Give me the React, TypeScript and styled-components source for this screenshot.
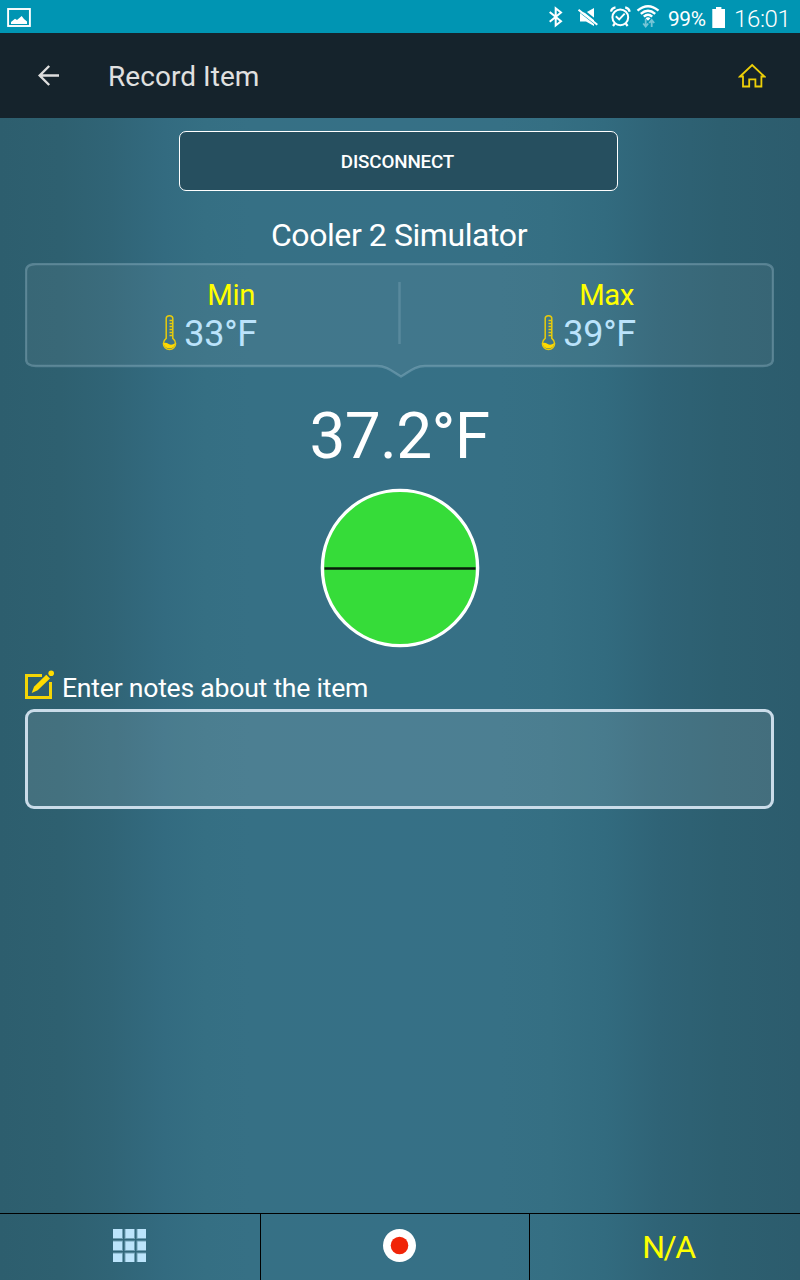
import React from "react";
import styled, { createGlobalStyle } from "styled-components";

const Global = createGlobalStyle`
  *, *::before, *::after { box-sizing: border-box; }
  body { margin: 0; font-family: Roboto, "Liberation Sans", sans-serif; }
`;

const Screen = styled.div`
  width: 800px;
  height: 1280px;
  display: flex;
  flex-direction: column;
  overflow: hidden;
  color: #fff;
  background: linear-gradient(
    90deg,
    #2d5e6e 0, #2e6070 60px, #306476 110px, #336b80 165px, #356f83 205px,
    #367085 250px, #367086 400px, #367085 500px, #356f83 550px, #326b7f 605px,
    #2f6376 660px, #2d5f70 720px, #2c5c6d 800px
  );
`;

const StatusBar = styled.header`
  height: 33px;
  flex: none;
  display: flex;
  align-items: center;
  justify-content: space-between;
  padding: 0 10px 0 7px;
  background: #0095b3;
`;

const StatusGroup = styled.div`
  display: flex;
  align-items: center;
`;

const StatusText = styled.span<{ $size: number; $width: number; $weight: number }>`
  width: ${(p) => p.$width}px;
  margin-left: 8px;
  padding-top: 4px;
  font-size: ${(p) => p.$size}px;
  line-height: 28px;
  font-weight: ${(p) => p.$weight};
  letter-spacing: -0.35px;
  white-space: nowrap;
`;

const AppBar = styled.nav`
  height: 85px;
  flex: none;
  display: flex;
  align-items: center;
  padding: 0 34px 0 37px;
  background: #15232c;
`;

const Title = styled.h1`
  flex: 1;
  margin: 2px 0 0 48px;
  font-size: 28px;
  line-height: 36px;
  font-weight: 400;
  letter-spacing: 0.05px;
  color: #e0e0e0;
`;

const IconButton = styled.button`
  display: flex;
  padding: 0;
  border: 0;
  background: none;
`;

const Content = styled.main`
  flex: 1;
  display: flex;
  flex-direction: column;
  align-items: center;
  padding: 13px 26px 0 25px;
`;

const DisconnectButton = styled.button`
  width: 439px;
  height: 60px;
  margin-right: 2px;
  padding: 2px 2px 0 0;
  border: 1px solid #fff;
  border-radius: 7px;
  background: #264f5f;
  color: #fff;
  font: 500 18.8px/56px Roboto, sans-serif;
  letter-spacing: -0.15px;
`;

const DeviceName = styled.h2`
  margin: 24px 0 8px;
  padding-right: 1px;
  font-size: 32px;
  line-height: 40px;
  font-weight: 400;
  letter-spacing: -0.42px;
`;

const RangePanel = styled.section`
  position: relative;
  width: 749px;
  height: 116px;
  display: flex;
  padding-top: 13px;
`;

const PanelFrame = styled.svg`
  position: absolute;
  inset: 0;
`;

const Limit = styled.div<{ $right: number }>`
  position: relative;
  width: 374px;
  display: flex;
  flex-direction: column;
  align-items: flex-end;
  padding-right: ${(p) => p.$right}px;
`;

const LimitLabel = styled.span`
  padding-right: 2px;
  font-size: 29.3px;
  line-height: 38px;
  letter-spacing: -0.4px;
  color: #ff0;
`;

const LimitValue = styled.span`
  display: flex;
  gap: 7px;
  font-size: 36px;
  line-height: 40px;
  letter-spacing: -0.25px;
  color: #bbe3fb;
`;

const Reading = styled.div`
  margin-top: 22px;
  font-size: 64px;
  line-height: 72px;
  letter-spacing: -0.7px;
`;

const Gauge = styled.svg`
  display: block;
  flex: none;
  margin: 15px 0 22px 1px;
`;

const NotesLabel = styled.label`
  align-self: stretch;
  height: 39px;
  display: flex;
  gap: 7px;
  font-size: 26.6px;
  line-height: 36px;
  letter-spacing: -0.24px;
`;

const NotesInput = styled.textarea`
  width: 749px;
  height: 100px;
  padding: 10px;
  border: 3px solid #cadce9;
  border-radius: 9px;
  outline: 0;
  resize: none;
  color: #fff;
  background: rgba(255, 255, 255, 0.11);
`;

const Footer = styled.footer`
  height: 67px;
  flex: none;
  display: grid;
  grid-template-columns: 261px 269px 270px;
  border-top: 1px solid #000;
`;

const FooterCell = styled.button<{ $pad: string }>`
  display: flex;
  align-items: center;
  justify-content: center;
  padding: ${(p) => p.$pad};
  border: 0;
  border-right: 1px solid #000;
  background: none;
  color: #ff0;
  font: 400 32px/40px Roboto, sans-serif;
  letter-spacing: -1.4px;

  &:last-child {
    border-right: 0;
  }
`;

const Thermometer = () => (
  <svg width="15" height="37" viewBox="0 0 15 37" fill="none">
    <path
      d="M4.2 24.3V4.5Q4.2 1.7 7.5 1.7T10.8 4.5V24.3Q13.6 26.4 13.6 29.5A6.1 6.1 0 0 1 1.4 29.5Q1.4 26.4 4.2 24.3Z"
      stroke="#e8cb0b"
      strokeWidth="1.5"
    />
    <path d="M7.5 6.5H10.5M7.5 9.5H10.5M7.5 12.5H10.5M7.5 15.5H10.5M7.5 18.5H10.5M7.5 21.5H10.5" stroke="#e8cb0b" strokeWidth="1.4" />
    <path d="M1.5 29Q4 28 6.7 30T13.4 29A6 6 0 0 1 1.5 29Z" fill="#ffd900" />
  </svg>
);

export default function App() {
  return (
    <>
      <Global />
      <Screen>
        <StatusBar>
          <svg width="24" height="33" viewBox="0 0 24 33">
            <rect x="1.1" y="9" width="21.8" height="17" fill="none" stroke="#fff" strokeWidth="1.9" />
            <path d="M4 24V22L8 18.7 10 20 14.7 16 17 19 20 21.5V24Z" fill="#fff" />
          </svg>
          <StatusGroup>
            <svg width="112" height="33" viewBox="548 0 112 33" fill="none" stroke="#fff">
              <path d="M549.7 12 561 21.3 555.7 25.5V8.3L561 12.5 549.7 21.7" strokeWidth="2" />
              <path d="M580 12.5H586L594 8V24L580 13ZM580 12.5V21.5H586L594 26V22Z" fill="#fff" stroke="none" />
              <path d="M580.4 8 598.8 22.7" stroke="#0095b3" strokeWidth="2" />
              <path d="M578.5 9.7 597.3 24.8" strokeWidth="2" />
              <circle cx="620.3" cy="17.3" r="7.9" strokeWidth="2" />
              <path d="M615.8 16.2 619.2 19.4 624.7 13.6" strokeWidth="1.9" />
              <path d="M611 11.7Q611.5 8 615.5 7.3M625.2 7.3Q629 8 629.7 11.7M614.8 23.5 613 26M625.8 23.5 627.6 26" strokeWidth="2.2" />
              <path d="M637.5 10.6Q648 1.8 658.5 10.6M640.8 13.8Q648 7.6 655.2 13.8M643.8 16.7Q648 12.8 652.2 16.7" strokeWidth="2.4" />
              <path d="M645.5 18.3Q648 16.1 650.5 18.3L648 20.8Z" fill="#fff" stroke="none" />
              <path d="M645.7 19V26M643.2 23.5 645.7 26.5 648.2 23.5M651.7 27V20.5M649.2 23 651.7 20 654.2 23" stroke="#76c5d6" strokeWidth="1.8" />
            </svg>
            <StatusText $size={20.8} $width={44} $weight={400}>99%</StatusText>
            <svg width="14" height="33" viewBox="0 0 14 33">
              <path d="M.3 9H4V7H9.4V9H13V28H.3Z" fill="#fff" />
            </svg>
            <StatusText $size={24} $width={56} $weight={350}>16:01</StatusText>
          </StatusGroup>
        </StatusBar>

        <AppBar>
          <IconButton aria-label="Back">
            <svg width="23" height="23" viewBox="0 0 23 23" fill="none" stroke="#dedede" strokeWidth="2.4">
              <path d="M22 11.5H3M12.2 2 2.7 11.5 12.2 21" />
            </svg>
          </IconButton>
          <Title>Record Item</Title>
          <IconButton aria-label="Home">
            <svg width="28" height="26" viewBox="0 0 28 26" fill="none" stroke="#edcf08" strokeWidth="1.8">
              <path d="M2 13.5 14.2 2 26.4 13.5H23.4V23.5H17.4V16.3H11.2V23.5H5V13.5Z" />
            </svg>
          </IconButton>
        </AppBar>

        <Content>
          <DisconnectButton>DISCONNECT</DisconnectButton>
          <DeviceName>Cooler 2 Simulator</DeviceName>

          <RangePanel>
            <PanelFrame width="749" height="116" viewBox="0 0 749 116">
              <path
                d="M11 1H738Q748 1 748 8V96Q748 103 738 103H400C390 103 384 109 376 113.5C368 109 362 103 352 103H11Q1 103 1 96V8Q1 1 11 1Z"
                fill="#fff"
                fillOpacity=".055"
                stroke="#b4d2e0"
                strokeOpacity=".3"
                strokeWidth="2.4"
              />
              <path d="M374.5 19V81" stroke="#b4d2e0" strokeOpacity=".2" strokeWidth="2.5" />
            </PanelFrame>
            <Limit $right={142}>
              <LimitLabel>Min</LimitLabel>
              <LimitValue><Thermometer />33°F</LimitValue>
            </Limit>
            <Limit $right={137}>
              <LimitLabel>Max</LimitLabel>
              <LimitValue><Thermometer />39°F</LimitValue>
            </Limit>
          </RangePanel>

          <Reading>37.2°F</Reading>
          <Gauge width="160" height="160" viewBox="0 0 160 160">
            <circle cx="80" cy="80" r="77.6" fill="#36dc39" stroke="#fff" strokeWidth="3.4" />
            <path d="M4.5 80.5H155.5" stroke="#0a1a0a" strokeWidth="2.6" />
          </Gauge>

          <NotesLabel htmlFor="notes">
            <svg width="30" height="30" viewBox="0 0 30 30">
              <path d="M17 5.5H1.5V27.5H25.5V12" fill="none" stroke="#f3d506" strokeWidth="3" />
              <path d="M6.7 23 9 16.7 21.3 4.7 25 8.5 12.7 20.3Z" fill="#ffdc00" />
              <circle cx="26.2" cy="3.2" r="2.8" fill="#ffdc00" />
            </svg>
            Enter notes about the item
          </NotesLabel>
          <NotesInput id="notes" />
        </Content>

        <Footer>
          <FooterCell $pad="0 1px 3px 0" aria-label="Grid">
            <svg width="33" height="33" viewBox="0 0 33 33">
              <path d="M0 0H10V10H0ZM11.5 0H22V10H11.5ZM23.5 0H33V10H23.5ZM0 11.5H10V22H0ZM11.5 11.5H22V22H11.5ZM23.5 11.5H33V22H23.5ZM0 23.5H10V33H0ZM11.5 23.5H22V33H11.5ZM23.5 23.5H33V33H23.5Z" fill="#bce4fb" fillOpacity=".45" />
              <path d="M0 0H9V9H0ZM12.5 0H21V9H12.5ZM24.5 0H33V9H24.5ZM0 12.5H9V21H0ZM12.5 12.5H21V21H12.5ZM24.5 12.5H33V21H24.5ZM0 24.5H9V33H0ZM12.5 24.5H21V33H12.5ZM24.5 24.5H33V33H24.5Z" fill="#bce4fb" />
            </svg>
          </FooterCell>
          <FooterCell $pad="0 0 3px 9px" aria-label="Record">
            <svg width="33" height="33" viewBox="0 0 33 33">
              <circle cx="16.5" cy="16.5" r="16.5" fill="#fff" />
              <circle cx="16.5" cy="16.5" r="8.8" fill="#f02408" />
            </svg>
          </FooterCell>
          <FooterCell $pad="0 0 1px 7px">N/A</FooterCell>
        </Footer>
      </Screen>
    </>
  );
}
